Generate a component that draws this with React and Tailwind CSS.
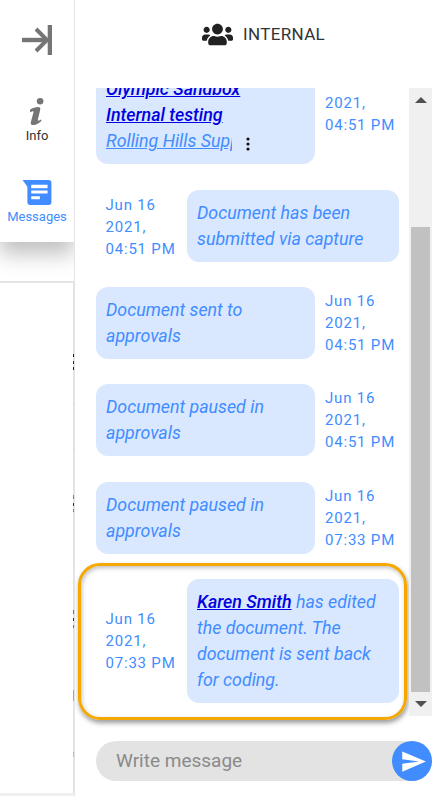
import { FaUsers } from 'react-icons/fa';
import { MdSend } from 'react-icons/md';

const messages = [
  { lines: 'Document sent to approvals', time: '04:51 PM' },
  { lines: 'Document paused in approvals', time: '04:51 PM' },
  { lines: 'Document paused in approvals', time: '07:33 PM' },
];

// clipped bits of the page behind the rail, measured from its top
const strayMarks = [
  { top: 71, height: 3, color: '#222222' },
  { top: 78, height: 3, color: '#333333' },
  { top: 84, height: 3, color: '#222222' },
  { top: 121, height: 1, color: '#c8c8c8' },
  { top: 166, height: 1, color: '#c8c8c8' },
  { top: 212, height: 4, color: '#4a90c8' },
  { top: 220, height: 3, color: '#333333' },
  { top: 226, height: 3, color: '#4a90c8' },
  { top: 327, height: 4, color: '#4a7fa8' },
  { top: 335, height: 3, color: '#333333' },
  { top: 342, height: 3, color: '#4a7fa8' },
  { top: 407, height: 11, color: '#c9a27c' },
  { top: 469, height: 5, color: '#b8b8b8' },
];

function Stamp({ time, className }) {
  return (
    <div className={`text-[15px] leading-[22px] tracking-[0.8px] text-[#418dff] ${className}`}>
      Jun 16
      <br />
      2021,
      <br />
      {time}
    </div>
  );
}

function Bubble({ className, children }) {
  return (
    <div className={`rounded-[12px] bg-[#d9e7ff] px-[10px] py-[10px] text-[17.8px] leading-[26px] italic text-[#418dff] ${className}`}>
      {children}
    </div>
  );
}

function Rail() {
  return (
    <div className="flex w-[75px] shrink-0 flex-col overflow-hidden border-r border-[#e4e4e4]">
      <div className="z-10 flex h-[242px] shrink-0 flex-col items-center bg-white shadow-[0_12px_20px_rgba(0,0,0,0.25)]">
        <svg viewBox="0 0 30 30" className="mt-[25px] h-[30px] w-[30px]" fill="#757575">
          <path d="M0 12.800h24v4.400H0z" />
          <path d="m14 4 11 11-11 11" fill="none" stroke="#757575" strokeWidth="4" />
          <path d="M25.700 0H30v30h-4.300z" />
        </svg>
        <svg viewBox="0 0 18 32" className="mt-[41px] h-[32px] w-[16px]" fill="#757575">
          <circle cx="12.500" cy="4" r="3.700" />
          <path d="M1 13.500c3-2 6.500-3 9.300-3 2 0 2.800 1 2.300 3L10 24.500c-.3 1.200.4 1.500 1.300 1l2.200-1.200.6 1.500c-2.800 2.600-5.800 4.700-9 4.900-2.400.2-3.600-1-3-3.500L5 16.500c.3-1.200-.6-1.500-1.600-1.100l-2 .8z" />
        </svg>
        <div className="mt-0 text-[13px] leading-[16px] text-[#333333]">Info</div>
        <svg viewBox="0 0 30 26" className="mt-[36px] h-[25px] w-[30px]">
          <path d="M0 0h27a3 3 0 0 1 3 3v20a3 3 0 0 1-3 3H8a3 3 0 0 1-3-3V7z" fill="#418dff" />
          <path d="M9 5h17v3.500H9zM9 11h17v3H9zM9 17h9v3H9z" fill="#fff" />
        </svg>
        <div className="mt-[4px] text-[13px] leading-[16px] text-[#418dff]">Messages</div>
      </div>
      <div className="relative mt-[39px] flex-1 border-t-2 border-r border-[#e4e4e4] bg-white">
        {strayMarks.map((m) => (
          <span
            key={m.top}
            className="absolute right-[-1px] w-px"
            style={{ top: m.top, height: m.height, backgroundColor: m.color }}
          />
        ))}
      </div>
      <div className="h-[3px] shrink-0 bg-[#f0f0f0]" />
    </div>
  );
}

export default function App() {
  return (
    <div className="flex h-[796px] w-[437px] overflow-hidden bg-white font-['Roboto',sans-serif]">
      <Rail />
      <div className="flex min-w-0 flex-1 flex-col">
        <div className="flex h-[88px] shrink-0 items-start gap-[10px] pt-[22px] pl-[127px] text-[17px] leading-[24px] tracking-[0.35px] text-[#333333]">
          <FaUsers className="h-[31px] w-[31px] -translate-y-[3px] text-[#222222]" />
          INTERNAL
        </div>
        <div className="flex h-[640px] shrink-0 items-start">
          <div className="h-[640px] w-[334px] shrink-0 overflow-hidden">
            <div className="-mt-[21.600px] flex flex-col gap-[25.300px] pl-[21px] pr-[10px]">
              <div className="flex">
                <Bubble className="relative h-[98px] w-[219px] shrink-0">
                  <div className="font-medium text-[#0000e0] underline">Olympic Sandbox</div>
                  <div className="font-medium text-[#0000e0] underline">Internal testing</div>
                  <div className="w-[126px] overflow-hidden whitespace-nowrap underline">Rolling Hills Supply</div>
                  <svg viewBox="0 0 4 14" className="absolute top-[71px] left-[150px] h-[14px] w-[4px]" fill="#111111">
                    <circle cx="2" cy="2" r="1.600" />
                    <circle cx="2" cy="7" r="1.600" />
                    <circle cx="2" cy="12" r="1.600" />
                  </svg>
                </Bubble>
                <Stamp time="04:51 PM" className="ml-[10px] pt-[4px]" />
              </div>
              <div className="flex items-center justify-between pl-[9.500px]">
                <Stamp time="04:51 PM" className="pt-[2px]" />
                <Bubble className="h-[72px] w-[212px]">Document has been submitted via capture</Bubble>
              </div>
              {messages.map((m, i) => (
                <div key={i} className="flex items-center">
                  <Bubble className="h-[72px] w-[219px] shrink-0 pr-[30px]">{m.lines}</Bubble>
                  <Stamp time={m.time} className="ml-[10px]" />
                </div>
              ))}
              <div className="relative flex items-center justify-between pl-[9.500px]">
                <div className="absolute -top-[16px] -bottom-[17px] -left-[18px] -right-[8px] rounded-[22px] border-[3px] border-[#f5a800] shadow-[1px_3px_5px_rgba(0,0,0,0.4),inset_1px_2px_4px_rgba(0,0,0,0.25)]" />
                <Stamp time="07:33 PM" />
                <Bubble className="h-[124px] w-[212px]">
                  <span className="font-medium text-[#0000e0] underline">Karen Smith</span> has edited the document. The document is sent back for coding.
                </Bubble>
              </div>
            </div>
          </div>
          <div className="flex h-[628px] w-[23px] shrink-0 flex-col items-center bg-[#f0f0f0]">
            <div className="mt-[9px] h-0 w-0 border-x-[6px] border-b-[6px] border-x-transparent border-b-[#505050]" />
            <div className="mt-[124px] h-[465px] w-[19px] bg-[#c1c1c1]" />
            <div className="mt-[9px] h-0 w-0 border-x-[6px] border-t-[6px] border-x-transparent border-t-[#505050]" />
          </div>
        </div>
        <div className="mt-[13px] ml-[21px] flex h-[40px] w-[336px] items-center">
          <div className="flex h-[40px] flex-1 items-center rounded-full bg-[#e3e3e3] pl-[20px] text-[19px] text-[#8a8a8a]">
            Write message
          </div>
          <div className="-ml-[40px] flex h-[40px] w-[40px] shrink-0 items-center justify-center rounded-full bg-[#418dff]">
            <MdSend className="h-[27px] w-[27px] translate-x-[1px] text-white" />
          </div>
        </div>
      </div>
    </div>
  );
}
